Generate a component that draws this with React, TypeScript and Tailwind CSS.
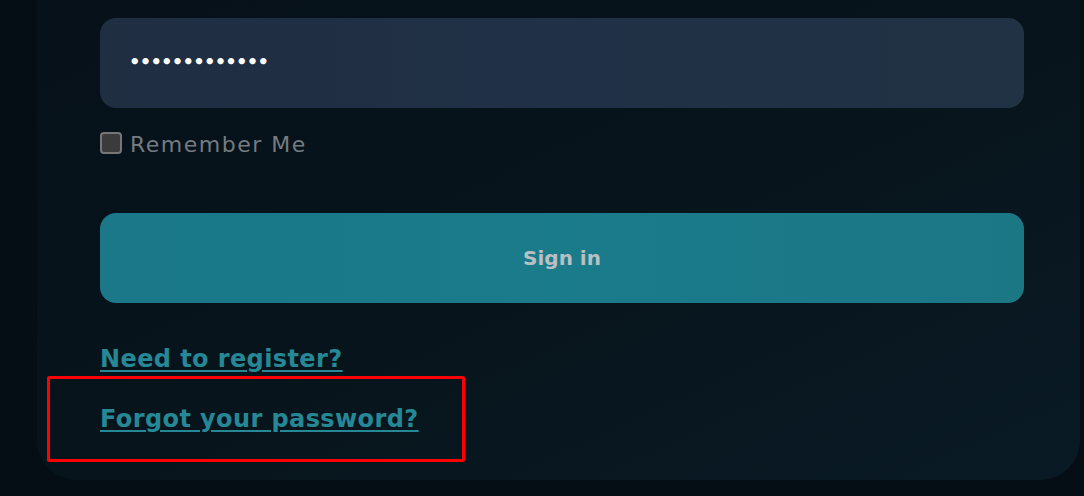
import React from "react";

export default function App() {
  return (
    <div
      className="relative w-[1084px] h-[496px] overflow-hidden bg-[#050e14]"
      style={{ fontFamily: '"DejaVu Sans", "Noto Sans", sans-serif' }}
    >
      <div className="ml-[37px] mr-[4px] h-[480px] rounded-br-[40px] rounded-bl-[40px] bg-gradient-to-br from-[#06111a] via-[#07141c] to-[#0a1a24] pt-[18px]">
        <div className="pl-[63px] pr-[56px]">
          <div className="h-[90px] rounded-[16px] bg-gradient-to-r from-[#1f2e41] via-[#203046] to-[#213244] flex items-center pl-[29px]">
            <span className="text-white text-[18px] font-bold leading-none tracking-[-0.8px] -mt-[2px]">
              •••••••••••••
            </span>
          </div>
          <div className="mt-[25px] flex items-center gap-[8px] h-[24px]">
            <span className="block w-[22px] h-[22px] rounded-[4px] border-2 border-[#767676] bg-[#3b3b3b] -mt-[5px]" />
            <span className="text-[22px] leading-none text-[#757b80] tracking-[1.5px]">Remember Me</span>
          </div>
          <button className="mt-[56px] h-[90px] w-full rounded-[16px] bg-gradient-to-r from-[#1a7888] via-[#1a7b8a] to-[#1c7785] flex items-center justify-center">
            <span className="text-[20px] font-bold text-[#b9bfc3]">Sign in</span>
          </button>
          <div className="mt-[38px] flex flex-col items-start gap-[24px]">
            <a className="text-[24px] font-bold leading-[36px] text-[#268896] underline underline-offset-[3px] decoration-[2px] tracking-[0.4px]">
              Need to register?
            </a>
            <a className="text-[24px] font-bold leading-[36px] text-[#268896] underline underline-offset-[3px] decoration-[2px] tracking-[0.4px]">
              Forgot your password?
            </a>
          </div>
        </div>
      </div>
      <div className="absolute left-[47px] top-[376px] w-[418px] h-[86px] border-[3px] border-[#ff0000] rounded-[2px]" />
    </div>
  );
}
